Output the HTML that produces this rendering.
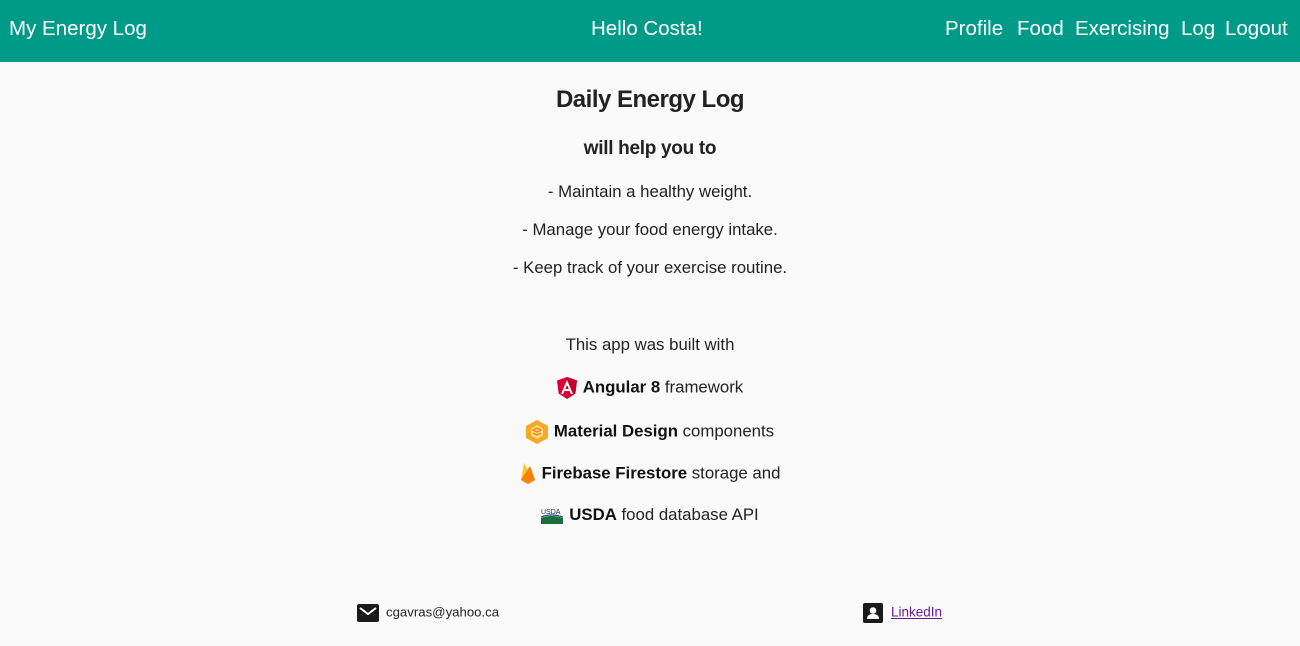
<!DOCTYPE html>
<html><head><meta charset="utf-8"><style>
body{margin:0;width:1300px;height:646px;background:#fafafa;font-family:"Liberation Sans",sans-serif;color:#222;position:relative;overflow:hidden}
.hdr{position:absolute;left:0;top:0;width:1300px;height:62px;background:#009b88;color:#fff;font-size:20.5px}
.hdr span{position:absolute;top:17px}
.c{position:absolute;left:0;width:1300px;text-align:center;white-space:nowrap}
.l{font-size:16.8px;color:#222}
b{color:#111}
.ic{display:inline-block;vertical-align:middle;margin-right:6px}
</style></head><body>
<div class="hdr">
<span style="left:9px">My Energy Log</span>
<span style="left:591px">Hello Costa!</span>
<span style="left:945px">Profile</span>
<span style="left:1017px">Food</span>
<span style="left:1075px">Exercising</span>
<span style="left:1181px">Log</span>
<span style="left:1225px">Logout</span>
</div>
<div class="c" style="top:86px;font-size:24px;font-weight:bold;letter-spacing:-0.5px">Daily Energy Log</div>
<div class="c" style="top:138px;font-size:19px;font-weight:bold;letter-spacing:-0.3px">will help you to</div>
<div class="c l" style="top:182px">- Maintain a healthy weight.</div>
<div class="c l" style="top:220px">- Manage your food energy intake.</div>
<div class="c l" style="top:258px">- Keep track of your exercise routine.</div>
<div class="c l" style="top:335px">This app was built with</div>
<div class="c l" style="top:377px"><svg class="ic" width="20" height="22" viewBox="0 0 20 22"><path d="M10 0L0 3.5l1.6 13L10 22l8.4-5.5L20 3.5z" fill="#dd0031"/><path d="M10 0v22l8.4-5.5L20 3.5z" fill="#c3002f"/><path d="M10 3L4 17h2.2l1.2-3h5.2l1.2 3H16zM8.3 12L10 8l1.7 4z" fill="#fff"/></svg><b>Angular 8</b> framework</div>
<div class="c l" style="top:420px"><svg class="ic" width="22" height="24" viewBox="0 0 22 24"><path d="M11 0l11 6v12l-11 6L0 18V6z" fill="#f9a825"/><path d="M11 5l6 3.5v7L11 19l-6-3.5v-7z" fill="#ffe082"/><path d="M11 8l4 2-4 2-4-2zM7 13l4 2 4-2" fill="none" stroke="#f57f17" stroke-width="1.3"/></svg><b>Material Design</b> components</div>
<div class="c l" style="top:463px"><svg class="ic" width="16" height="22" viewBox="0 0 16 22"><path d="M1 17L4 0l4 7 2-4 5 14-7 4z" fill="#ffca28"/><path d="M1 17l7-10 2-4 5 14-7 4z" fill="#ffa000"/><path d="M1 17L10 3l5 14-7 4z" fill="#f6820c"/></svg><b>Firebase Firestore</b> storage and</div>
<div class="c l" style="top:505px"><svg class="ic" width="22" height="16" viewBox="0 0 22 16"><text x="0" y="6" font-size="7" fill="#234">USDA</text><path d="M0 10q10-4 22 0v6H0z" fill="#1b6e3c"/><path d="M0 9q10-4 22 0" stroke="#1a4f8a" fill="none" stroke-width="1.2"/></svg><b>USDA</b> food database API</div>
<div style="position:absolute;left:357px;top:604px;font-size:13.2px;color:#222"><svg width="22" height="18" viewBox="0 0 22 18" style="vertical-align:middle;margin-right:7px"><rect width="22" height="18" rx="2" fill="#1a1a1a"/><path d="M3 4l8 6 8-6" stroke="#fff" stroke-width="2" fill="none"/></svg>cgavras@yahoo.ca</div>
<div style="position:absolute;left:863px;top:603px;font-size:13.5px"><svg width="20" height="20" viewBox="0 0 20 20" style="vertical-align:middle;margin-right:8px"><rect width="20" height="20" rx="2" fill="#1a1a1a"/><circle cx="10" cy="7.5" r="3.3" fill="#fff"/><path d="M4 16q0-5 6-5t6 5z" fill="#fff"/></svg><a href="#" style="color:#6a1b9a;text-decoration:underline">LinkedIn</a></div>
</body></html>
